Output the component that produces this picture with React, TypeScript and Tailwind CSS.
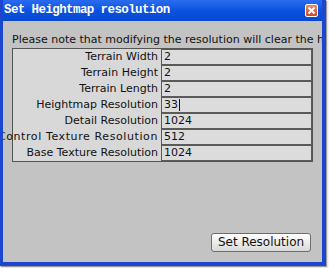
import React from "react";

const rows: [string, string][] = [
  ["Terrain Width", "2"],
  ["Terrain Height", "2"],
  ["Terrain Length", "2"],
  ["Heightmap Resolution", "33"],
  ["Detail Resolution", "1024"],
  ["Control Texture Resolution", "512"],
  ["Base Texture Resolution", "1024"],
];

export default function App() {
  return (
    <div className="w-[329px] h-[268px] bg-[#f4f4f4] overflow-hidden">
      <div className="w-[326px] h-[266px] flex flex-col bg-[#1f4fd8] border-l-[3px] border-r-[4px] border-b-[4px] border-[#1a46d0] shadow-[1px_1px_1px_#9a9a9a]">
        <div className="h-[21px] shrink-0 flex items-center justify-between bg-gradient-to-b from-[#2a6cf0] via-[#0a52e0] to-[#0848d0] pl-[1px] pr-[4px]">
          <span
            className="text-white font-bold text-[12.5px] leading-none tracking-[-0.6px]"
            style={{ fontFamily: '"Liberation Mono", "DejaVu Sans Mono", monospace' }}
          >
            Set Heightmap resolution
          </span>
          <div className="w-[13px] h-[13px] rounded-[2px] bg-gradient-to-b from-[#f08a6a] to-[#d2461e] border border-white flex items-center justify-center">
            <svg width="9" height="9" viewBox="0 0 9 9">
              <path d="M1.5 1.5 L7.5 7.5 M7.5 1.5 L1.5 7.5" stroke="white" strokeWidth="1.8" />
            </svg>
          </div>
        </div>
        <div
          className="flex-1 bg-[#c3c3c3] flex flex-col overflow-hidden"
          style={{ fontFamily: '"DejaVu Sans", "Liberation Sans", sans-serif' }}
        >
          <div className="pt-[11px] pl-[9px] text-[11px] leading-[15px] text-[#111] whitespace-nowrap">
            Please note that modifying the resolution will clear the heightmap
          </div>
          <div className="ml-[9px] mt-[1px] w-[301px] border border-[#555] bg-[#d8d8d8]">
            {rows.map(([label, value]) => (
              <div key={label} className="flex h-[16px]">
                <div className="w-[148px] shrink-0 pr-[3px] text-[11px] leading-[16px] text-[#111] whitespace-nowrap flex justify-end">
                  <span className={label.startsWith("Control") ? "tracking-[0.6px]" : ""}>{label}</span>
                </div>
                <div className="flex-1 border border-[#5a5a5a] bg-[#dcdcdc] text-[11px] leading-[14px] pl-[2px] text-[#111] flex items-center">
                  <span>{value}</span>
                  {value === "33" && <span className="inline-block w-[1px] h-[12px] bg-[#111] ml-[1px]" />}
                </div>
              </div>
            ))}
          </div>
          <div className="flex-1" />
          <div className="flex justify-end pr-[11px] pb-[10px]">
            <button className="w-[100px] h-[19px] rounded-[3px] border border-[#6e6e6e] bg-gradient-to-b from-[#ffffff] to-[#d9d9d9] text-[12px] leading-[17px] text-[#111]">
              Set Resolution
            </button>
          </div>
        </div>
      </div>
    </div>
  );
}
